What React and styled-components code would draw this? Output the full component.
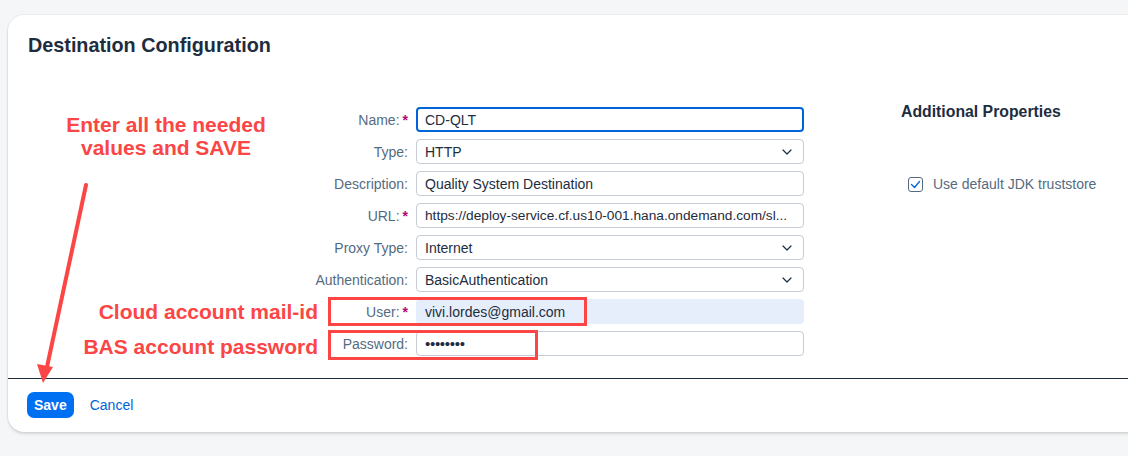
import React from 'react';
import styled, { createGlobalStyle } from 'styled-components';

const GlobalStyle = createGlobalStyle`
  html, body {
    margin: 0;
    background: #f5f6f7;
    overflow: hidden;
    font-family: "Liberation Sans", Arial, sans-serif;
  }
`;

const RED = '#fc4545';

// Page + card
const Page = styled.div`
  padding: 15px 0 0 8px;
  height: 456px;
  box-sizing: border-box;
`;

const Card = styled.section`
  position: relative;
  width: 1140px;
  background: #fff;
  border-radius: 16px;
  box-shadow: 0 0 0 1px rgba(0, 0, 0, 0.04), 0 2px 3px rgba(0, 0, 0, 0.12);
  display: flex;
  flex-direction: column;
`;

const Header = styled.header`
  padding: 18px 20px 0;
`;

const Title = styled.h1`
  margin: 0;
  font-size: 19.8px;
  line-height: 24px;
  font-weight: 700;
  color: #1d2d3e;
`;

const Body = styled.div`
  display: flex;
  margin-top: 50px;
`;

const Form = styled.div`
  display: flex;
  flex-direction: column;
  gap: 7px;
`;

const Row = styled.div`
  position: relative;
  display: grid;
  grid-template-columns: 320px 88px 388px;
  align-items: center;
  height: 25px;
`;

const Note = styled.div`
  text-align: right;
  padding-right: 10px;
  font-size: 21px;
  font-weight: 700;
  color: ${RED};
  white-space: nowrap;
  transform: translateY(${p => p.$shift || 0}px);
`;

const Label = styled.label`
  display: flex;
  justify-content: flex-end;
  padding-right: 8px;
  font-size: 14px;
  color: #556b82;
  white-space: nowrap;
  min-width: 0;
`;

const Req = styled.span`
  color: #ba066c;
  margin-left: 3px;
  font-weight: 700;
`;

const Field = styled.div`
  box-sizing: border-box;
  height: 25px;
  display: flex;
  align-items: center;
  padding: 0 ${p => (p.$focused ? 7 : 8)}px;
  border: ${p => (p.$focused ? '2px solid #0064d9' : p.$filled ? '1px solid #e5eefa' : '1px solid #c5ccd3')};
  border-radius: 4px;
  background: ${p => (p.$filled ? '#e5eefa' : '#fff')};
  font-size: 14px;
  color: #1d2d3e;
  overflow: hidden;
`;

const Value = styled.span`
  flex: 1;
  white-space: nowrap;
  overflow: hidden;
  font-size: ${p => (p.$dots ? '15px' : p.$small ? '13.7px' : '14px')};
  letter-spacing: ${p => (p.$dots ? '-0.3px' : '0')};
`;

const Chevron = styled.svg`
  width: 10px;
  height: 6px;
  margin-right: 3px;
  flex: none;
`;

const Highlight = styled.div`
  position: absolute;
  left: 320px;
  top: ${p => p.$top}px;
  width: ${p => p.$width}px;
  height: ${p => p.$height}px;
  border: 3px solid ${RED};
  box-sizing: border-box;
  pointer-events: none;
`;

const Side = styled.aside`
  padding-left: 97px;
  display: flex;
  flex-direction: column;
`;

const SideTitle = styled.h2`
  margin: -5px 0 0;
  font-size: 15.8px;
  line-height: 20px;
  font-weight: 700;
  color: #1d2d3e;
`;

const CheckRow = styled.label`
  display: flex;
  align-items: center;
  gap: 10px;
  margin: 52px 0 0 7px;
  font-size: 14px;
  color: #556b82;
  line-height: 20px;
`;

const Box = styled.span`
  box-sizing: border-box;
  width: 15px;
  height: 15px;
  border: 1px solid #556b82;
  border-radius: 3px;
  display: flex;
  align-items: center;
  justify-content: center;
`;

const Divider = styled.hr`
  margin: 22px 0 0;
  border: 0;
  border-top: 1px solid #1d2d3e;
`;

const Footer = styled.footer`
  display: flex;
  align-items: center;
  gap: 16px;
  padding: 13px 19px 14px;
`;

const Button = styled.button`
  font-family: inherit;
  font-size: 14px;
  height: 26px;
  border-radius: 7px;
  cursor: pointer;
  padding: 0 ${p => (p.$primary ? 7 : 0)}px;
  border: 0;
  font-weight: ${p => (p.$primary ? 700 : 400)};
  background: ${p => (p.$primary ? '#0070f2' : 'transparent')};
  color: ${p => (p.$primary ? '#fff' : '#0064d9')};
`;

const TopNote = styled.div`
  position: absolute;
  left: 58px;
  top: 98px;
  width: 200px;
  text-align: center;
  font-size: 21px;
  line-height: 23px;
  font-weight: 700;
  color: ${RED};
  white-space: nowrap;
`;

const ArrowLayer = styled.svg`
  position: absolute;
  left: 0;
  top: 0;
  width: 120px;
  height: 400px;
  pointer-events: none;
`;

const ChevronIcon = () => (
  <Chevron viewBox="0 0 10 6">
    <path d="M1 1l4 4 4-4" fill="none" stroke="#1d2d3e" strokeWidth="1.2" strokeLinecap="round" strokeLinejoin="round" />
  </Chevron>
);

const fields = [
  { label: 'Name:', req: true, value: 'CD-QLT', focused: true },
  { label: 'Type:', value: 'HTTP', select: true },
  { label: 'Description:', value: 'Quality System Destination' },
  { label: 'URL:', req: true, value: 'https://deploy-service.cf.us10-001.hana.ondemand.com/sl...', small: true },
  { label: 'Proxy Type:', value: 'Internet', select: true },
  { label: 'Authentication:', value: 'BasicAuthentication', select: true },
  { label: 'User:', req: true, value: 'vivi.lordes@gmail.com', filled: true, note: 'Cloud account mail-id', box: { top: -2, width: 259, height: 29 } },
  { label: 'Password:', value: '••••••••', dots: true, note: 'BAS account password', shift: 3, box: { top: -1, width: 210, height: 30 } },
];

const App = () => {
  return (
    <Page>
      <GlobalStyle />
      <Card>
        <Header>
          <Title>Destination Configuration</Title>
        </Header>
        <Body>
          <Form>
            {fields.map(f => (
              <Row key={f.label}>
                <Note $shift={f.shift}>{f.note}</Note>
                <Label>
                  {f.label}
                  {f.req && <Req>*</Req>}
                </Label>
                <Field $focused={f.focused} $filled={f.filled}>
                  <Value $dots={f.dots} $small={f.small}>{f.value}</Value>
                  {f.select && <ChevronIcon />}
                </Field>
                {f.box && <Highlight $top={f.box.top} $width={f.box.width} $height={f.box.height} />}
              </Row>
            ))}
          </Form>
          <Side>
            <SideTitle>Additional Properties</SideTitle>
            <CheckRow>
              <Box>
                <svg width="11" height="9" viewBox="0 0 11 9">
                  <path d="M1.5 4.5l3 3 5-6" fill="none" stroke="#0064d9" strokeWidth="1.3" strokeLinecap="round" strokeLinejoin="round" />
                </svg>
              </Box>
              Use default JDK truststore
            </CheckRow>
          </Side>
        </Body>
        <Divider />
        <Footer>
          <Button $primary>Save</Button>
          <Button>Cancel</Button>
        </Footer>

        {/* annotation overlay */}
        <TopNote>
          Enter all the needed
          <br />
          values and SAVE
        </TopNote>
        <ArrowLayer viewBox="0 0 120 400">
          <line x1="78" y1="170" x2="39" y2="352" stroke={RED} strokeWidth="4" strokeLinecap="round" />
          <polygon points="35,368 29,349 45,352" fill={RED} />
        </ArrowLayer>
      </Card>
    </Page>
  );
};

export default App;
